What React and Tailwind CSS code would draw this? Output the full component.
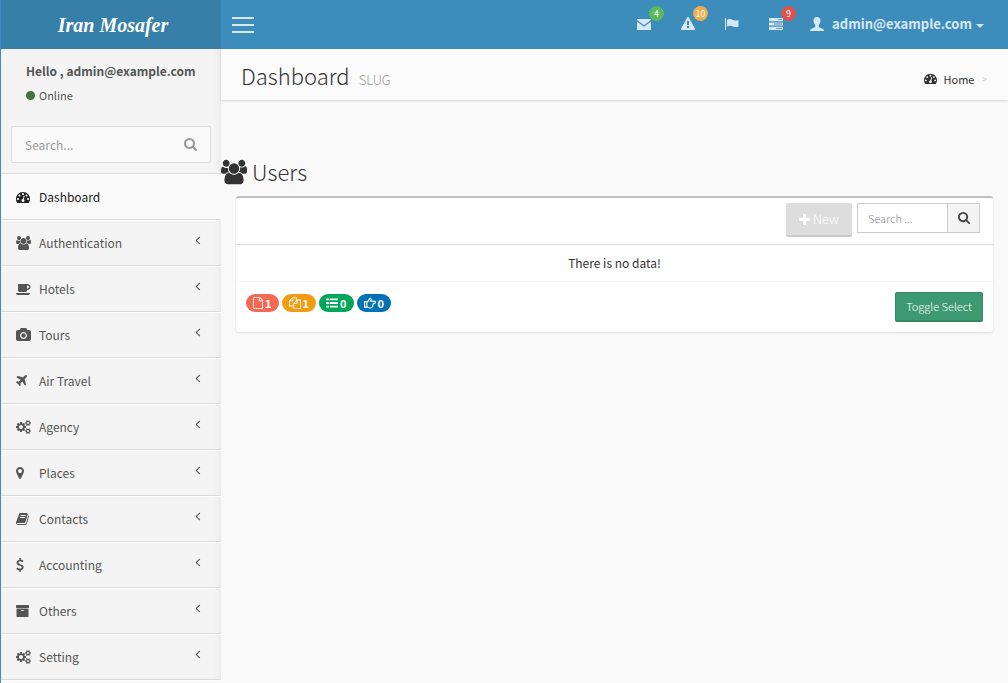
const P = {
  users: ['0 0 1920 1792', 'M593 896q-162 5-265 128h-134q-82 0-138-40.5t-56-118.5q0-353 124-353 6 0 43.5 21t97.5 42.5 119 21.5q67 0 133-23-5 37-5 66 0 159 93 293zm1071 637q0 120-73 189.5t-194 69.5h-874q-121 0-194-69.5t-73-189.5q0-53 3.5-103.5t14-109 26.5-108.5 43-97.5 62-81 85.5-53.5 111.5-20q10 0 43 21.5t73 48 107 48 135 21.5 135-21.5 107-48 73-48 43-21.5q61 0 111.5 20t85.5 53.5 62 81 43 97.5 26.5 108.5 14 109 3.5 103.5zm-1024-1277q0 106-75 181t-181 75-181-75-75-181 75-181 181-75 181 75 75 181zm704 384q0 159-112.5 271.5t-271.5 112.5-271.5-112.5-112.5-271.5 112.5-271.5 271.5-112.5 271.5 112.5 112.5 271.5zm576 225q0 78-56 118.5t-138 40.5h-134q-103-123-265-128 93-134 93-293 0-29-5-66 66 23 133 23 59 0 119-21.5t97.5-42.5 43.5-21q124 0 124 353zm-128-609q0 106-75 181t-181 75-181-75-75-181 75-181 181-75 181 75 75 181z'],
  gauge: ['0 0 1792 1792', 'M384 1152q0-53-37.5-90.5t-90.5-37.5-90.5 37.5-37.5 90.5 37.5 90.5 90.5 37.5 90.5-37.5 37.5-90.5zm192-448q0-53-37.5-90.5t-90.5-37.5-90.5 37.5-37.5 90.5 37.5 90.5 90.5 37.5 90.5-37.5 37.5-90.5zm428 481l101-382q6-26-7.5-48.5t-38.5-29.5-48 6.5-30 39.5l-101 382q-60 5-107 43.5t-63 98.5q-20 77 20 146t117 89 146-20 89-117q16-60-6-117t-72-91zm660-33q0-53-37.5-90.5t-90.5-37.5-90.5 37.5-37.5 90.5 37.5 90.5 90.5 37.5 90.5-37.5 37.5-90.5zm-640-640q0-53-37.5-90.5t-90.5-37.5-90.5 37.5-37.5 90.5 37.5 90.5 90.5 37.5 90.5-37.5 37.5-90.5zm448 192q0-53-37.5-90.5t-90.5-37.5-90.5 37.5-37.5 90.5 37.5 90.5 90.5 37.5 90.5-37.5 37.5-90.5zm320 448q0 261-141 483-19 29-54 29h-1402q-35 0-54-29-141-221-141-483 0-182 71-348t191-286 286-191 348-71 348 71 286 191 191 286 71 348z'],
  coffee: ['0 0 1920 1792', 'M1664 640q0-80-56-136t-136-56h-64v384h64q80 0 136-56t56-136zm-1664 768h1792q0 106-75 181t-181 75h-1280q-106 0-181-75t-75-181zm1856-768q0 159-112.5 271.5t-271.5 112.5h-64v32q0 92-66 158t-158 66h-704q-92 0-158-66t-66-158v-736q0-26 19-45t45-19h1152q159 0 271.5 112.5t112.5 271.5z'],
  camera: ['0 0 1920 1792', 'M960 672q119 0 203.5 84.5t84.5 203.5-84.5 203.5-203.5 84.5-203.5-84.5-84.5-203.5 84.5-203.5 203.5-84.5zm704-416q106 0 181 75t75 181v896q0 106-75 181t-181 75h-1408q-106 0-181-75t-75-181v-896q0-106 75-181t181-75h224l51-136q19-49 69.5-84.5t103.5-35.5h512q53 0 103.5 35.5t69.5 84.5l51 136h224zm-704 1152q185 0 316.5-131.5t131.5-316.5-131.5-316.5-316.5-131.5-316.5 131.5-131.5 316.5 131.5 316.5 316.5 131.5z'],
  plane: ['192 0 1408 1792', 'M1568 160q44 52 12 148t-108 172l-161 161 160 696q5 19-12 33l-128 96q-7 6-19 6-4 0-7-1-15-3-21-16l-279-508-259 259 53 194q5 17-8 31l-96 96q-9 9-23 9h-2q-15-2-24-13l-189-252-252-189q-11-7-13-23-1-13 9-25l96-97q9-9 23-9 6 0 8 1l194 53 259-259-508-279q-14-8-17-24-2-16 9-27l128-128q14-13 30-8l665 159 160-160q76-76 172-108t148 12z'],
  cogs: ['0 0 1920 1792', 'M896 896q0-106-75-181t-181-75-181 75-75 181 75 181 181 75 181-75 75-181zm768 512q0-52-38-90t-90-38-90 38-38 90q0 53 37.5 90.5t90.5 37.5 90.5-37.5 37.5-90.5zm0-1024q0-52-38-90t-90-38-90 38-38 90q0 53 37.5 90.5t90.5 37.5 90.5-37.5 37.5-90.5zm-384 421v185q0 10-7 19.5t-16 10.5l-155 24q-11 35-32 76 34 48 90 115 7 11 7 20 0 12-7 19-23 30-82.5 89.5t-78.5 59.5q-11 0-21-7l-115-90q-37 19-77 31-11 108-23 155-7 24-30 24h-186q-11 0-20-7.5t-10-17.5l-23-153q-34-10-75-31l-118 89q-7 7-20 7-11 0-21-8-144-133-144-160 0-9 7-19 10-14 41-53t47-61q-23-44-35-82l-152-24q-10-1-17-9.5t-7-19.5v-185q0-10 7-19.5t16-10.5l155-24q11-35 32-76-34-48-90-115-7-11-7-20 0-12 7-20 22-30 82-89t79-59q11 0 21 7l115 90q34-18 77-32 11-108 23-154 7-24 30-24h186q11 0 20 7.5t10 17.5l23 153q34 10 75 31l118-89q8-7 20-7 11 0 21 8 144 133 144 160 0 8-7 19-12 16-42 54t-45 60q23 48 34 82l152 23q10 2 17 10.5t7 19.5zm640 533v140q0 16-149 31-12 27-30 52 51 113 51 138 0 4-4 7-122 71-124 71-8 0-46-47t-52-68q-20 2-30 2t-30-2q-14 21-52 68t-46 47q-2 0-124-71-4-3-4-7 0-25 51-138-18-25-30-52-149-15-149-31v-140q0-16 149-31 13-29 30-52-51-113-51-138 0-4 4-7 4-2 35-20t59-34 30-16q8 0 46 46.5t52 67.5q20-2 30-2t30 2q51-71 92-112l6-2q4 0 124 70 4 3 4 7 0 25-51 138 17 23 30 52 149 15 149 31zm0-1024v140q0 16-149 31-12 27-30 52 51 113 51 138 0 4-4 7-122 71-124 71-8 0-46-47t-52-68q-20 2-30 2t-30-2q-14 21-52 68t-46 47q-2 0-124-71-4-3-4-7 0-25 51-138-18-25-30-52-149-15-149-31v-140q0-16 149-31 13-29 30-52-51-113-51-138 0-4 4-7 4-2 35-20t59-34 30-16q8 0 46 46.5t52 67.5q20-2 30-2t30 2q51-71 92-112l6-2q4 0 124 70 4 3 4 7 0 25-51 138 17 23 30 52 149 15 149 31z'],
  marker: ['384 0 1024 1792', 'M1152 640q0-106-75-181t-181-75-181 75-75 181 75 181 181 75 181-75 75-181zm256 0q0 109-33 179l-364 774q-16 33-47.5 52t-67.5 19-67.5-19-46.5-52l-365-774q-33-70-33-179 0-212 150-362t362-150 362 150 150 362z'],
  book: ['64 0 1664 1792', 'M1703 478q40 57 18 129l-275 906q-19 64-76.5 107.5t-122.5 43.5h-923q-77 0-148.5-53.5t-99.5-131.5q-24-67-2-127 0-4 3-27t4-37q1-8-3-21.5t-3-19.5q2-11 8-21t16.5-23.5 16.5-23.5q23-38 45-91.5t30-91.5q3-10 .5-30t-.5-28q3-11 17-28t17-23q21-36 42-92t25-90q1-9-2.5-32t.5-28q4-13 22-30.5t22-22.5q19-26 42.5-84.5t27.5-96.5q1-8-3-25.5t-2-26.5q2-8 9-18t18-23 17-21q8-12 16.5-30.5t15-35 16-36 19.5-32 26.5-23.5 36-11.5 47.5 5.5l-1 3q38-9 51-9h761q74 0 114 56t18 130l-274 906q-36 119-71.5 153.5t-128.5 34.5h-869q-27 0-38 15-11 16-1 43 24 70 144 70h923q29 0 56-15.5t35-41.5l300-987q7-22 5-57 38 15 59 43zm-1064 2q-4 13 2 22.5t20 9.5h608q13 0 25.5-9.5t16.5-22.5l21-64q4-13-2-22.5t-20-9.5h-608q-13 0-25.5 9.5t-16.5 22.5zm-83 256q-4 13 2 22.5t20 9.5h608q13 0 25.5-9.5t16.5-22.5l21-64q4-13-2-22.5t-20-9.5h-608q-13 0-25.5 9.5t-16.5 22.5z'],
  dollar: ['384 0 1024 1792', 'M1362 1185q0 153-99.5 263.5t-258.5 136.5v175q0 14-9 23t-23 9h-135q-13 0-22.5-9.5t-9.5-22.5v-175q-66-9-127.5-31t-101.5-44.5-74-48-46.5-37.5-17.5-18q-17-21-2-41l103-135q7-10 23-12 15-2 24 9l2 2q113 99 243 125 37 8 74 8 81 0 142.5-43t61.5-122q0-28-15-53t-33.5-42-58.5-37.5-66-32-80-32.5q-39-16-61.5-25t-61.5-26.5-62.5-31-56.5-35.5-53.5-42.5-43.5-49-35.5-58-21-66.5-8.5-78q0-138 98-242t255-134v-180q0-13 9.5-22.5t22.5-9.5h135q14 0 23 9t9 23v176q57 6 110.5 23t87 33.5 63.5 37.5 39 29 15 14q17 18 5 38l-81 146q-8 15-23 16-14 3-27-7-3-3-14.5-12t-39-26.5-58.5-32-74.5-26-85.5-11.5q-95 0-155 43t-60 111q0 26 8.5 48t29.5 41.5 39.5 33 56 31 60.5 27 70 27.5q53 20 81 31.5t76 35 75.5 42.5 62 50 53 63.5 31.5 76.5 13 94z'],
  archive: ['64 0 1664 1792', 'M1088 832q0-26-19-45t-45-19h-256q-26 0-45 19t-19 45 19 45 45 19h256q26 0 45-19t19-45zm576-192v960q0 26-19 45t-45 19h-1408q-26 0-45-19t-19-45v-960q0-26 19-45t45-19h1408q26 0 45 19t19 45zm64-448v256q0 26-19 45t-45 19h-1536q-26 0-45-19t-19-45v-256q0-26 19-45t45-19h1536q26 0 45 19t19 45z'],
  search: ['64 128 1664 1664', 'M1216 832q0-185-131.5-316.5t-316.5-131.5-316.5 131.5-131.5 316.5 131.5 316.5 316.5 131.5 316.5-131.5 131.5-316.5zm512 832q0 52-38 90t-90 38q-54 0-90-38l-343-342q-179 124-399 124-143 0-273.5-55.5t-225-150-150-225-55.5-273.5 55.5-273.5 150-225 225-150 273.5-55.5 273.5 55.5 225 150 150 225 55.5 273.5q0 220-124 399l343 343q37 37 37 90z'],
  angle: ['576 384 704 1152', 'M1203 544q0 13-10 23l-393 393 393 393q10 10 10 23t-10 23l-50 50q-10 10-23 10t-23-10l-466-466q-10-10-10-23t10-23l466-466q10-10 23-10t23 10l50 50q10 10 10 23z'],
  plus: ['192 128 1408 1408', 'M1600 736v192q0 40-28 68t-68 28h-416v416q0 40-28 68t-68 28h-192q-40 0-68-28t-28-68v-416h-416q-40 0-68-28t-28-68v-192q0-40 28-68t68-28h416v-416q0-40 28-68t68-28h192q40 0 68 28t28 68v416h416q40 0 68 28t28 68z'],
  warning: ['0 0 1792 1792', 'M1024 1375v-190q0-14-9.5-23.5t-22.5-9.5h-192q-13 0-22.5 9.5t-9.5 23.5v190q0 14 9.5 23.5t22.5 9.5h192q13 0 22.5-9.5t9.5-23.5zm-2-374l18-459q0-12-10-19-13-11-24-11h-220q-11 0-24 11-10 7-10 21l17 457q0 10 10 16.5t24 6.5h185q14 0 23.500-6.500t10.500-16.500zm-14-934l768 1408q35 63-2 126-17 29-46.500 46t-63.500 17h-1536q-34 0-63.500-17t-46.500-46q-37-63-2-126l768-1408q17-31 47-49t65-18 65 18 47 49z'],
  file: ['128 0 1536 1792', 'M1596 380q28 28 48 76t20 88v1152q0 40-28 68t-68 28h-1344q-40 0-68-28t-28-68v-1600q0-40 28-68t68-28h896q40 0 88 20t76 48zm-444-244v376h376q-10-29-22-41l-313-313q-12-12-41-22zm384 1528v-1024h-416q-40 0-68-28t-28-68v-416h-768v1536h1280z'],
  files: ['0 0 1792 1792', 'M1696 384q40 0 68 28t28 68v1216q0 40-28 68t-68 28h-960q-40 0-68-28t-28-68v-288h-544q-40 0-68-28t-28-68v-672q0-40 20-88t48-76l408-408q28-28 76-48t88-20h416q40 0 68 28t28 68v328q68-40 128-40h416zm-544 213l-299 299h299v-299zm-640-384l-299 299h299v-299zm196 647l316-316v-416h-384v416q0 40-28 68t-68 28h-416v640h512v-256q0-40 20-88t48-76zm956 804v-1152h-384v416q0 40-28 68t-68 28h-416v640h896z'],
  list: ['0 0 13 12', 'M0 1h3v2H0zM4 1h9v2H4zM0 5h3v2H0zM4 5h9v2H4zM0 9h3v2H0zM4 9h9v2H4z'],
  hand: ['0 0 13 12', 'M.6 4.500h2.400v6H.6zM3 4.500h1L6 1.500q1-1.300 1.600 0 .2 1-.7 2.500h4.400q1.100.2 1.100 1.200t-1.100 1.200H9.500M3 10.500h1q1 .9 3 .9 2 0 2-1.300 1-.8.500-1.900.8-.8.500-1.800'],
  envelope: ['0 0 14 14', 'M0 2h14v1L7 8.200 0 3zM0 4.600l7 5.200 7-5.200V13H0z'],
  flag: ['0 0 14 14', 'M0 1h1v12H0zM2 3q2.500-2 6 0 2.500 1.200 5.500 0v6.500q-3 1.200-5.500 0-3-1.700-6 0z'],
  tasks: ['0 0 14 14', 'M0 1h14v3.200H0zM0 5.400h14v3.200H0zM0 9.800h14v3.200H0zM9 2.200v.8h4v-.8zM5 6.600v.8h8v-.8zM7 11v.8h6V11z'],
  user: ['0 0 14 14', 'M7 0c2.200 0 3.500 1.500 3.500 3.800 0 1.700-.7 3.200-1.800 4.200v1.300c0 .6.3.8 1 1.100L13 12q1 .5 1 1.500v.5H0v-.5q0-1 1-1.500l3.300-1.600c.7-.3 1-.5 1-1.100V8C4.200 7 3.500 5.500 3.500 3.800 3.500 1.500 4.800 0 7 0z'],
};

function Icon({ name, className, outline }) {
  const [box, d] = P[name];
  return (
    <svg viewBox={box} aria-hidden="true" className={className} fill={outline ? 'none' : 'currentColor'} stroke={outline ? 'currentColor' : 'none'} strokeWidth="1.2" fillRule="evenodd">
      <path d={d} />
    </svg>
  );
}

const menu = [
  ['Authentication', 'users', 'w-[15px]'],
  ['Hotels', 'coffee', 'w-[15px]'],
  ['Tours', 'camera', 'w-[15px]'],
  ['Air Travel', 'plane', 'w-[11px]'],
  ['Agency', 'cogs', 'w-[15px]'],
  ['Places', 'marker', 'w-2'],
  ['Contacts', 'book', 'w-[13px]'],
  ['Accounting', 'dollar', 'w-2'],
  ['Others', 'archive', 'w-[13px]'],
  ['Setting', 'cogs', 'w-[15px]'],
];

const alerts = [
  ['Messages', 'envelope', '4', 'bg-[#5cb85c]'],
  ['Warnings', 'warning', '10', 'bg-[#f0ad4e]'],
  ['Flags', 'flag', null, ''],
  ['Tasks', 'tasks', '9', 'bg-[#d9534f]'],
];

const counts = [
  ['file', '1', 'bg-[#f56954]', 'w-[10px]'],
  ['files', '1', 'bg-[#f39c12]', 'w-3'],
  ['list', '0', 'bg-[#00a65a]', 'w-3'],
  ['hand', '0', 'bg-[#0073b7]', 'w-3'],
];

function Header() {
  return (
    <header className="flex h-[49px] bg-[#3c8dbc] text-[#d8e8f2]">
      <a href="#" className="flex w-[220px] shrink-0 items-center justify-center bg-[#367fa9] pl-1 font-['Liberation_Serif',serif] text-[20px] font-bold italic text-white">Iran Mosafer</a>
      <nav className="flex flex-1 items-center justify-between pr-6 pl-[11px]">
        <button aria-label="Toggle navigation" className="flex w-[22px] flex-col gap-[5px]">
          <span className="h-[2px] bg-current" />
          <span className="h-[2px] bg-current" />
          <span className="h-[2px] bg-current" />
        </button>
        <div className="flex items-center">
          {alerts.map(([label, icon, n, color]) => (
            <button key={label} aria-label={label} className="relative flex h-[49px] w-11 items-center justify-center pb-px">
              <Icon name={icon} className="h-[14px] w-[14px]" />
              {n && <span className={`absolute top-[6px] right-[2px] flex h-[15px] w-[15px] items-center justify-center rounded-full text-[9px] leading-none text-white ${color}`}>{n}</span>}
            </button>
          ))}
          <button className="ml-3 flex items-center gap-2 pb-[2px] text-[13px] leading-5 font-bold">
            <Icon name="user" className="h-[14px] w-[14px]" />
            <span className="flex items-center gap-1">
              admin@example.com
              <svg viewBox="0 0 8 4" className="mt-1 h-1 w-2" fill="currentColor" aria-hidden="true"><path d="M0 0h8L4 4z" /></svg>
            </span>
          </button>
        </div>
      </nav>
    </header>
  );
}

function Sidebar() {
  return (
    <aside className="w-[220px] shrink-0 bg-[#f4f4f4] text-[12px] shadow-[inset_-3px_0_8px_-4px_rgba(0,0,0,0.1)]">
      <div className="px-[25px] pt-3 leading-5 text-[#555]">
        <p className="font-bold whitespace-nowrap">Hello , admin@example.com</p>
        <a href="#" className="mt-1 flex items-center gap-1 text-[11px]"><span className="h-[9px] w-[9px] rounded-full bg-[#3c763d]" />Online</a>
      </div>
      <form className="mx-[10px] mt-[21px] mb-[10px] flex h-[37px] items-center rounded-xs border border-[#dbdbdb] bg-[#fafafa] px-[13px]">
        <input aria-label="Search menu" placeholder="Search..." className="min-w-0 flex-1 bg-transparent outline-none placeholder:text-[#999]" />
        <button type="button" aria-label="Search" className="text-[#999]"><Icon name="search" className="h-[13px] w-[13px]" /></button>
      </form>
      <ul className="border-t border-[#dbdbdb]">
        <li className="border-b border-[#dbdbdb]">
          <a href="#" className="flex h-[45px] items-center bg-[#f9f9f9] px-[15px] text-[#222]"><span className="w-[23px]"><Icon name="gauge" className="h-[14px] w-[14px]" /></span>Dashboard</a>
        </li>
        {menu.map(([label, icon, w]) => (
          <li key={label} className="border-b border-[#dbdbdb]">
            <a href="#" className="flex h-[45px] items-center border-t border-white pr-5 pl-[15px] text-[#555]">
              <span className="w-[23px]"><Icon name={icon} className={`h-[14px] ${w}`} /></span>
              <span className="flex-1">{label}</span>
              <Icon name="angle" className="mb-[6px] h-[9px] w-[6px]" />
            </a>
          </li>
        ))}
        <li className="border-t border-white" />
      </ul>
    </aside>
  );
}

export default function App() {
  return (
    <div className="h-screen overflow-hidden border-l border-[#428bca] bg-[#f9f9f9] font-['Noto_Sans_CJK_SC',sans-serif] text-[#333]">
      <Header />
      <div className="flex">
        <Sidebar />
        <main className="min-w-0 flex-1">
          <div className="flex h-[51px] items-center justify-between bg-[#fbfbfb] pr-[21px] pl-5 shadow-[0_1px_2px_rgba(0,0,0,0.15)]">
            <h1 className="flex items-baseline gap-[9px] pt-[6px] text-[22px] leading-8 font-light">Dashboard <small className="text-[13px] text-[#999]">SLUG</small></h1>
            <nav aria-label="Breadcrumb" className="flex items-center pt-2 text-[11px] leading-4">
              <a href="#" className="flex items-center gap-[6px]"><Icon name="gauge" className="h-[13px] w-[13px]" />Home</a>
              <span className="ml-[7px] text-[10px] text-[#ccc]">&gt;</span>
            </nav>
          </div>
          <h2 className="mt-[56px] flex h-8 items-center gap-[5px] text-[22px] leading-8 font-light"><Icon name="users" className="h-[26px] w-[26px]" /><span className="pb-[2px]">Users</span></h2>
          <section className="mx-[15px] mt-2 rounded-[3px] border-t-2 border-[#c1c1c1] bg-white shadow-[0_1px_2px_rgba(0,0,0,0.12)]">
            <div className="flex h-[47px] items-start justify-end gap-[5px] border-b border-[#dbdbdb] pt-[5px] pr-[13px]">
              <button className="flex h-[34px] items-center gap-[3px] rounded-xs border-b-2 border-[#c8c8c8] bg-[#ddd] px-[13px] text-[13px] font-light text-white"><Icon name="plus" className="h-[11px] w-[11px]" />New</button>
              <form className="flex h-[30px] border border-[#ccc] text-[11px]">
                <input aria-label="Search users" placeholder="Search ..." className="w-[89px] px-[10px] font-light outline-none placeholder:text-[#888]" />
                <button type="button" aria-label="Search" className="flex w-8 items-center justify-center border-l border-[#ccc] bg-[#f4f4f4] text-[#444]"><Icon name="search" className="h-3 w-3" /></button>
              </form>
            </div>
            <p className="flex h-[37px] items-center justify-center border-b border-[#f4f4f4] text-[12px]">There is no data!</p>
            <div className="flex items-start justify-between p-[10px]">
              <div className="flex gap-[3px] pt-[2px]">
                {counts.map(([icon, n, color, w]) => (
                  <span key={icon} className={`flex h-[18px] items-center gap-[2px] rounded-full px-[7px] text-[11px] leading-none font-bold text-white ${color}`}>
                    <Icon name={icon} outline={icon === 'hand'} className={`h-3 ${w}`} />{n}
                  </span>
                ))}
              </div>
              <button className="h-[30px] rounded-xs border border-b-2 border-[#368763] bg-[#3d9970] px-[10px] text-[11px] font-light text-white">Toggle Select</button>
            </div>
          </section>
        </main>
      </div>
    </div>
  );
}
